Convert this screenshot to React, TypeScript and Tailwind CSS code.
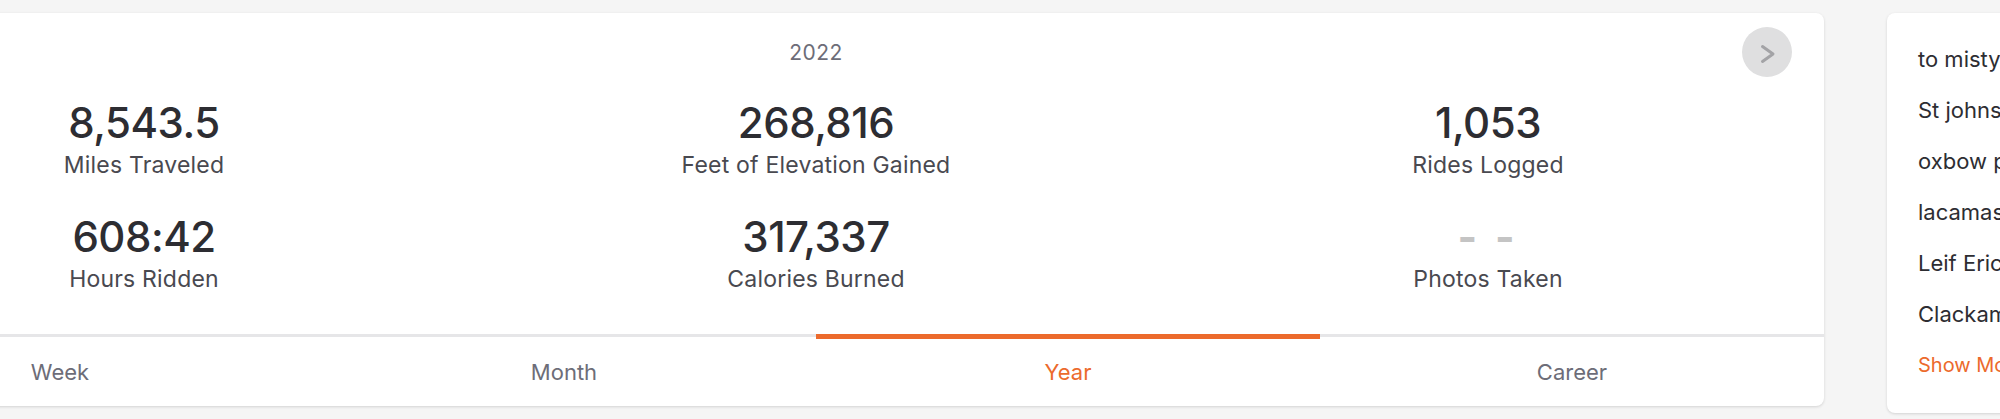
import React from 'react';

const stats = [
  { value: '8,543.5', label: 'Miles Traveled' },
  { value: '268,816', label: 'Feet of Elevation Gained' },
  { value: '1,053', label: 'Rides Logged' },
  { value: '608:42', label: 'Hours Ridden' },
  { value: '317,337', label: 'Calories Burned' },
  { value: null, label: 'Photos Taken' },
];

const tabs = ['Week', 'Month', 'Year', 'Career'];

const routes = ['to misty', 'St johns', 'oxbow p', 'lacamas', 'Leif Eric', 'Clackam'];

function StatsCard() {
  return (
    <div className="-ml-[192px] w-[2016px] h-[393px] shrink-0 flex flex-col bg-white rounded-lg shadow-[0_1px_3px_rgba(0,0,0,0.14)]">
      {/* Header */}
      <div className="relative pt-[26px] text-center">
        <span className="text-[21px] leading-[28px] tracking-[0.5px] text-[#6d6d78]">2022</span>
        <button className="absolute top-[14px] right-[32px] w-[50px] h-[50px] rounded-full bg-[#dfdfe0] flex items-center justify-center">
          <svg width="50" height="50" viewBox="0 0 50 50" fill="none">
            <polyline
              points="20.5,19.5 31,27 20.5,34.5"
              stroke="#a3a3a6"
              strokeWidth="3"
              strokeLinecap="round"
              strokeLinejoin="round"
            />
          </svg>
        </button>
      </div>

      {/* Stats */}
      <div className="mt-[32px] grid grid-cols-3 gap-y-[34px]">
        {stats.map((s) => (
          <div key={s.label} className="flex flex-col items-center gap-[4px]">
            {s.value ? (
              <span className="text-[42px] leading-[48px] font-medium text-[#2d2d32] tracking-[-0.5px]">
                {s.value}
              </span>
            ) : (
              <span className="text-[42px] leading-[48px] font-bold text-[#c4c4c4] tracking-[4px]">- -</span>
            )}
            <span className="text-[23px] leading-[28px] tracking-[0.2px] text-[#494950]">{s.label}</span>
          </div>
        ))}
      </div>

      {/* Tabs */}
      <div className="mt-auto grid grid-cols-4 border-t-[3px] border-[#e6e6e8]">
        {tabs.map((t) => {
          const active = t === 'Year';
          return (
            <div key={t} className="relative pt-[21px] pb-[20px] text-center">
              {active && <div className="absolute left-0 right-0 -top-[3px] h-[5px] bg-[#ec6a2c]" />}
              <span
                className={
                  active
                    ? 'text-[22px] leading-[28px] text-[#ec6a2c]'
                    : 'text-[22px] leading-[28px] text-[#6d6d78]'
                }
              >
                {t}
              </span>
            </div>
          );
        })}
      </div>
    </div>
  );
}

function RoutesCard() {
  return (
    <div className="ml-[63px] w-[320px] h-[400px] shrink-0 bg-white rounded-lg shadow-[0_1px_3px_rgba(0,0,0,0.14)] pl-[31px] pt-[21px] overflow-hidden">
      {routes.map((r) => (
        <div key={r} className="text-[22px] leading-[51px] text-[#2d2d32] whitespace-nowrap">
          {r}
        </div>
      ))}
      <div className="text-[20px] leading-[51px] text-[#ec6a2c] whitespace-nowrap">Show More</div>
    </div>
  );
}

export default function App() {
  return (
    <div
      className="w-[2000px] h-[419px] overflow-hidden bg-[#f5f5f5] flex items-start pt-[13px]"
      style={{ fontFamily: 'Inter, "Noto Sans", sans-serif' }}
    >
      <StatsCard />
      <RoutesCard />
    </div>
  );
}
